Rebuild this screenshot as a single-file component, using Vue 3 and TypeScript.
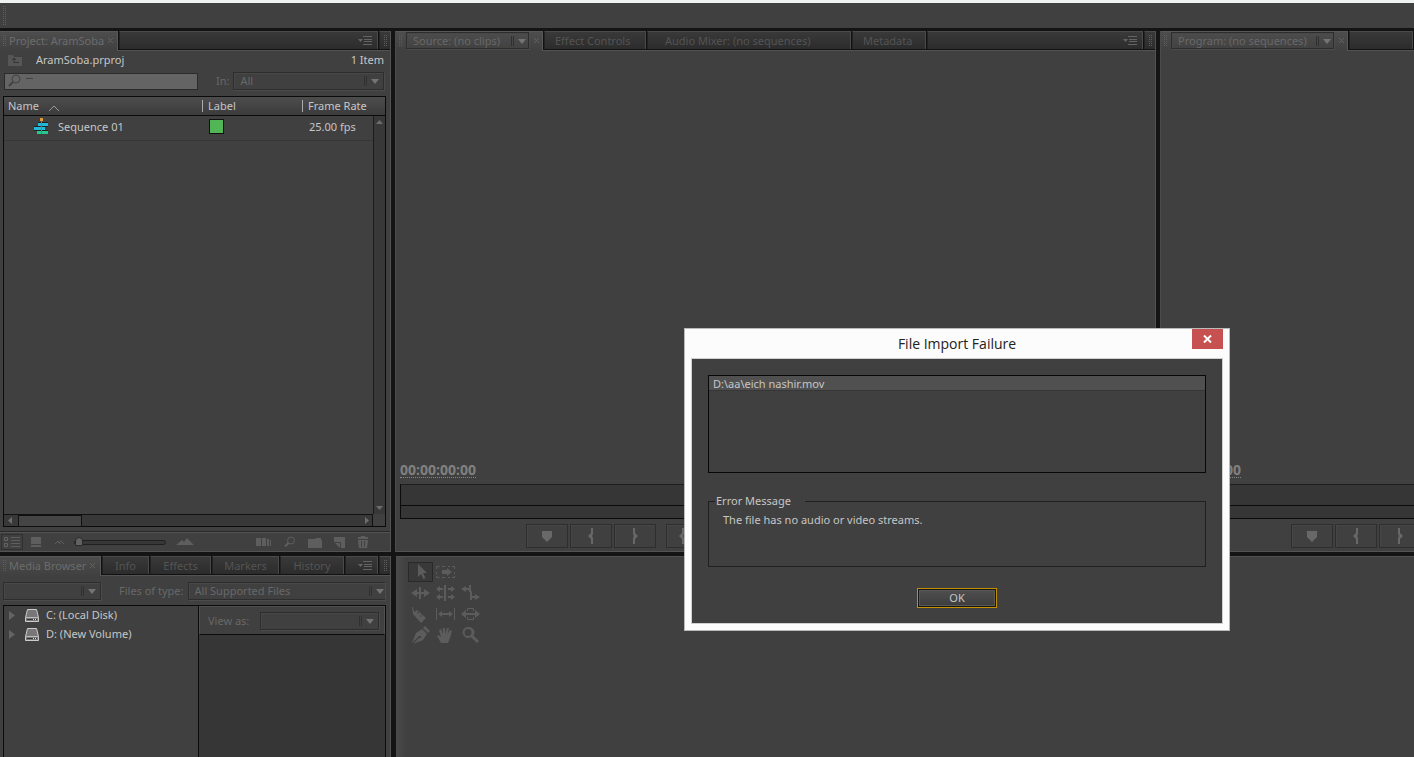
<script setup lang="ts">
import { ref } from 'vue'

interface Tab { label: string; width: number }
interface Monitor { id: string; title: string; pick: number; tabs: Tab[]; menu: boolean }

const monitors: Monitor[] = [
  {
    id: 'source',
    title: 'Source: (no clips)',
    pick: 123,
    menu: true,
    tabs: [
      { label: 'Effect Controls', width: 102 },
      { label: 'Audio Mixer: (no sequences)', width: 204 },
      { label: 'Metadata', width: 74 },
    ],
  },
  { id: 'program', title: 'Program: (no sequences)', pick: 163, menu: false, tabs: [] },
]

const browserTabs: Tab[] = [
  { label: 'Info', width: 47 },
  { label: 'Effects', width: 61 },
  { label: 'Markers', width: 67 },
  { label: 'History', width: 64 },
]

const drives = ['C: (Local Disk)', 'D: (New Volume)']
const search = ref('')
const zoom = ref(0)

const transport = [
  { name: 'Add marker', d: 'M3 3h10v6l-5 5-5-5z', split: false },
  { name: 'Mark in', d: 'M8 0h2v6l-1 2 1 2v6H8v-5L5 8l3-3z', split: false },
  { name: 'Mark out', d: 'M6 0h2v5l3 3-3 3v5H6v-6l1-2-1-2z', split: false },
  { name: 'Go to in', d: 'M3 0h2v6L4 8l1 2v6H3v-5L0 8l3-3zM7 8l4-4v3h5v2h-5v3z', split: true },
]

const tools = [
  { name: 'Selection', d: 'M7 1v13l3-3 2.5 5 2-1-2.5-5h4z', line: '' },
  { name: 'Track select', d: 'M6 7h5V5l5 4-5 4v-2H6z', line: 'M.5 6V3.500h3M6 3.500h3M12 3.500h2M16 3.500h2.500V6M.5 9v2M18.500 9v2M.5 13v1.500h3M6 14.500h3M12 14.500h2M16 14.500h2.500V13' },
  { name: '', d: '', line: '' },
  { name: 'Ripple edit', d: 'M0 9l6-4v3h2V3h2v5h3V5l6 4-6 4v-3h-3v5H8v-5H6v3z', line: '' },
  { name: 'Rolling edit', d: 'M8 1h2v16H8zM0 5l4-3v2h3v2H4v2zM19 5l-4-3v2h-3v2h3v2zM0 13l4-3v2h3v2H4v2zM19 13l-4-3v2h-3v2h3v2z', line: '' },
  { name: 'Rate stretch', d: 'M0 5l5-3v2h3V1h2v5l1 2v4h3v-2l5 3-5 3v-2h-3v2H9V9L7 6H5v2z', line: '' },
  { name: 'Razor', d: 'M1 2h1l1 5 3-2 9 8-5 5-8-9zM6 8l1 1 1-1-1-1zM9 11l1 1 1-1-1-1z', line: '' },
  { name: 'Slip', d: 'M2 9l4-3v2h7V6l4 3-4 3v-2H6v2z', line: 'M.5 3v12M18.500 3v12' },
  { name: 'Slide', d: 'M0 9l5-4v3h9V5l5 4-5 4v-3H5v3z', line: 'M6.500 6V3.500h6V6M6.500 12v2.500h6V12' },
  { name: 'Pen', d: 'M14 0l5 5-2 2-5-5zM11 3l5 5-4 6-10 4 6-6h2v-2L8 10l-7 7L5 7z', line: '' },
  { name: 'Hand', d: 'M5 17L1 10l1-1 3 2-2-7 2-1 2 5-.2-6h2l.7 6 1.500-6h2L11.500 8 14 4l2 1-2 7-2 5z', line: '' },
  { name: 'Zoom', d: 'M7 1a5.500 5.500 0 1 0 3 10.200L16 17l2-2-5.500-5.500A5.500 5.500 0 0 0 7 1zm0 2a3.500 3.500 0 1 1 0 7 3.500 3.500 0 0 1 0-7z', line: '' },
]
</script>

<template>
  <div class="app">
    <div class="chrome"></div>
    <header class="toolbar"><i class="grip tall"></i></header>

    <main class="workspace">
      <div class="row upper">
        <section class="panel side">
          <div class="tabs">
            <div class="tab active project-tab"><i class="grip"></i><span>Project: AramSoba</span>
              <button class="x" aria-label="Close project"><svg width="7" height="7" viewBox="0 0 7 7"><path d="M1 1l5 5M6 1L1 6" /></svg></button>
            </div>
            <div class="tab filler">
              <button class="menu" aria-label="Panel menu"><svg width="14" height="9" viewBox="0 0 14 9"><path d="M0 3h5L2.500 6z" /><path d="M5 0h9v1H5zM6 3h8v1H6zM6 5h8v1H6zM5 8h9v1H5z" /></svg></button>
            </div>
            <div class="tab end"><i class="grip"></i></div>
          </div>

          <div class="file-line">
            <svg width="14" height="12" viewBox="0 0 14 12"><path fill="#565656" d="M0 1h5l1 2h8v9H0z" /><path fill="none" stroke="#333" d="M6 4v4.500h5M4 6l2-2 2 2" /></svg>
            <span>AramSoba.prproj</span><span class="count">1 Item</span>
          </div>
          <div class="find-line">
            <label class="search">
              <svg width="26" height="14" viewBox="0 0 26 14"><circle cx="8" cy="5" r="4" fill="none" stroke="#424242" /><path stroke="#424242" stroke-width="2" d="M5 8l-4 4" /><path fill="#424242" d="M18 4h7v1h-7z" /></svg>
              <input v-model="search" type="text" aria-label="Search project" />
            </label>
            <label class="dim" for="in">In:</label>
            <div class="pick grow"><select id="in"><option>All</option></select><svg class="caret" width="15" height="12" viewBox="0 0 15 12"><path class="bar" d="M.5 1v10M2.500 1v10" /><path d="M7 4h8l-4 5z" /></svg></div>
          </div>

          <div class="bin">
            <table>
              <thead>
                <tr><th class="c-name">Name <svg width="12" height="7" viewBox="0 0 12 7"><path fill="none" stroke="#9a9a9a" d="M1 6l5-5 5 5" /></svg></th><th class="c-label"><span>Label</span></th><th><span>Frame Rate</span></th></tr>
              </thead>
              <tbody>
                <tr>
                  <td class="item">
                    <svg width="15" height="17" viewBox="0 0 15 17"><path fill="#25b8d6" d="M4 5h10v3H4zM0 9h11v3H0z" /><path fill="#25c98d" d="M3 13h11v3H3z" /><path fill="#222" d="M4 4h10v1H4zM0 8h14v1H0zM0 12h14v1H0z" /><path fill="#e29b35" d="M6 0h3v3H6z" /><path fill="#d1543c" d="M7 3h1v13H7z" /></svg>
                    <span>Sequence 01</span>
                  </td>
                  <td><i class="swatch"></i></td>
                  <td>25.00 fps</td>
                </tr>
              </tbody>
            </table>
            <div class="vbar"><svg width="7" height="4" viewBox="0 0 7 4"><path d="M0 4h7L3.500 0z" /></svg><svg width="7" height="4" viewBox="0 0 7 4"><path d="M0 0h7L3.500 4z" /></svg></div>
            <div class="hbar"><svg width="4" height="7" viewBox="0 0 4 7"><path d="M4 0v7L0 3.500z" /></svg><i class="thumb"></i><svg width="4" height="7" viewBox="0 0 4 7"><path d="M0 0v7l4-3.500z" /></svg></div>
          </div>

          <footer class="bin-tools">
            <button class="view on" aria-label="List view"><svg width="16" height="12" viewBox="0 0 16 12"><path fill="none" stroke="#646464" d="M.5 1.500h3v3h-3zM.5 7.500h3v3h-3z" /><path d="M7 1h9v1H7zM7 4h9v1H7zM7 7h9v1H7zM7 10h9v1H7z" /></svg></button>
            <button class="view" aria-label="Icon view"><svg width="10" height="10" viewBox="0 0 10 10"><path d="M0 0h10v7H0zM0 8h10v2H0z" /></svg></button>
            <svg width="9" height="5" viewBox="0 0 9 5"><path fill="none" stroke="#5e5e5e" d="M0 4l3-3 2 3M4 3l2-2 3 3" /></svg>
            <input v-model.number="zoom" class="zoom" type="range" min="0" max="100" aria-label="Thumbnail size" />
            <svg width="18" height="8" viewBox="0 0 18 8"><path d="M0 7l6-5 2 2 3-4 7 7z" /></svg>
            <div class="bin-actions">
              <button aria-label="Automate to sequence"><svg width="16" height="10" viewBox="0 0 16 10"><path d="M0 1h5v8H0zM6 1h4v8H6zM11 2h2v7h-2zM14 3h1v6h-1z" /></svg></button>
              <button aria-label="Find"><svg width="12" height="12" viewBox="0 0 12 12"><circle cx="7" cy="4.500" r="3.500" fill="none" stroke="#5e5e5e" /><path stroke="#5e5e5e" stroke-width="2" d="M4.500 7L1 10.500" /></svg></button>
              <button aria-label="New bin"><svg width="14" height="11" viewBox="0 0 14 11"><path d="M0 2h7l1-1h5v2H0zM0 3h14v8H0z" /></svg></button>
              <button aria-label="New item"><svg width="11" height="11" viewBox="0 0 11 11"><path d="M0 0h11v11H7V5H0z" /><path d="M1 6h5v5z" /></svg></button>
              <button aria-label="Clear"><svg width="12" height="12" viewBox="0 0 12 12"><path d="M4 0h4v1h3v2H1V1h3zM1 4h10l-1 8H2z" /><path stroke="#404040" d="M4.500 5v6M7.500 5v6" /></svg></button>
            </div>
          </footer>
        </section>

        <section v-for="m in monitors" :key="m.id" class="panel monitor" :class="m.id">
          <div class="tabs">
            <div class="tab active monitor-tab"><i class="grip"></i>
              <div class="pick" :style="{ width: m.pick + 'px' }"><select :aria-label="m.title"><option>{{ m.title }}</option></select><svg class="caret" width="15" height="12" viewBox="0 0 15 12"><path class="bar" d="M.5 1v10M2.500 1v10" /><path d="M7 4h8l-4 5z" /></svg></div>
              <button class="x" aria-label="Close panel"><svg width="7" height="7" viewBox="0 0 7 7"><path d="M1 1l5 5M6 1L1 6" /></svg></button>
            </div>
            <button v-for="t in m.tabs" :key="t.label" class="tab" :style="{ width: t.width + 'px' }">{{ t.label }}</button>
            <div class="tab filler">
              <button v-if="m.menu" class="menu" aria-label="Panel menu"><svg width="14" height="9" viewBox="0 0 14 9"><path d="M0 3h5L2.500 6z" /><path d="M5 0h9v1H5zM6 3h8v1H6zM6 5h8v1H6zM5 8h9v1H5z" /></svg></button>
            </div>
            <div v-if="m.menu" class="tab end"><i class="grip"></i></div>
          </div>
          <div class="screen"></div>
          <div class="time"><span>00:00:00:00</span></div>
          <div class="ruler"><i></i></div>
          <div class="transport">
            <button v-for="b in transport" :key="b.name" :class="{ split: b.split }" :aria-label="b.name"><svg width="16" height="16" viewBox="0 0 16 16"><path :d="b.d" /></svg></button>
          </div>
        </section>
      </div>

      <div class="row lower">
        <section class="panel side">
          <div class="tabs">
            <div class="tab active browser-tab"><i class="grip"></i><span>Media Browser</span>
              <button class="x" aria-label="Close media browser"><svg width="7" height="7" viewBox="0 0 7 7"><path d="M1 1l5 5M6 1L1 6" /></svg></button>
            </div>
            <button v-for="t in browserTabs" :key="t.label" class="tab center" :style="{ width: t.width + 'px' }">{{ t.label }}</button>
            <div class="tab filler">
              <button class="menu" aria-label="Panel menu"><svg width="14" height="9" viewBox="0 0 14 9"><path d="M0 3h5L2.500 6z" /><path d="M5 0h9v1H5zM6 3h8v1H6zM6 5h8v1H6zM5 8h9v1H5z" /></svg></button>
            </div>
            <div class="tab end"><i class="grip"></i></div>
          </div>
          <div class="type-line">
            <div class="pick recent"><select aria-label="Recent directories"><option></option></select><svg class="caret" width="15" height="12" viewBox="0 0 15 12"><path class="bar" d="M.5 1v10M2.500 1v10" /><path d="M7 4h8l-4 5z" /></svg></div>
            <label class="dim" for="types">Files of type:</label>
            <div class="pick grow cut"><select id="types"><option>All Supported Files</option></select><svg class="caret" width="15" height="12" viewBox="0 0 15 12"><path class="bar" d="M.5 1v10M2.500 1v10" /><path d="M7 4h8l-4 5z" /></svg></div>
          </div>
          <div class="browser">
            <ul>
              <li v-for="d in drives" :key="d">
                <svg width="6" height="9" viewBox="0 0 6 9"><path fill="#636363" d="M0 0l6 4.500L0 9z" /></svg>
                <svg width="14" height="13" viewBox="0 0 14 13"><path fill="#777" stroke="#ccc" d="M2.500.5h9l2 8v4H.5v-4z" /><path fill="#bbb" d="M1 8h12v1H1z" /><path fill="#333" d="M2 10h10v1H2z" /><path fill="#ddd" d="M8 10h1v1H8zM10 10h1v1h-1z" /></svg>
                <span>{{ d }}</span>
              </li>
            </ul>
            <div class="viewer">
              <div class="view-as"><label class="dim" for="view">View as:</label>
                <div class="pick grow"><select id="view"><option></option></select><svg class="caret" width="15" height="12" viewBox="0 0 15 12"><path class="bar" d="M.5 1v10M2.500 1v10" /><path d="M7 4h8l-4 5z" /></svg></div>
              </div>
            </div>
          </div>
        </section>
        <section class="panel timeline">
          <div class="tools">
            <template v-for="(t, i) in tools" :key="i">
              <button v-if="t.name" :class="{ on: i === 0 }" :aria-label="t.name"><svg width="19" height="18" viewBox="0 0 19 18"><path :d="t.d" fill-rule="evenodd" /><path class="line" :d="t.line" /></svg></button>
              <span v-else></span>
            </template>
          </div>
        </section>
      </div>
    </main>

    <div class="dialog" role="dialog" aria-labelledby="dialog-title">
      <h1 id="dialog-title">File Import Failure</h1>
      <button class="close" aria-label="Close"><svg width="9" height="8" viewBox="0 0 9 8"><path d="M1 .5l7 7M8 .5l-7 7" stroke="#fff" stroke-width="2" /></svg></button>
      <div class="dialog-body">
        <ul class="files"><li>D:\aa\eich nashir.mov</li></ul>
        <fieldset><legend>Error Message</legend><p>The file has no audio or video streams.</p></fieldset>
        <button class="ok">OK</button>
      </div>
    </div>
  </div>
</template>

<style>
body { background: #141414; overflow: hidden; }
</style>

<style scoped>
* { box-sizing: border-box; }
.app { position: relative; display: flex; flex-direction: column; height: 100vh; overflow: hidden; background: #141414; color: #c6c6c6; font: 11px/14px "Noto Sans", "DejaVu Sans Condensed", sans-serif; }
svg { display: block; flex: none; }
button, select, input { font: inherit; color: inherit; background: none; border: 0; padding: 0; margin: 0; outline: 0; }
ul { list-style: none; margin: 0; padding: 0; }
.chrome { height: 3px; flex: none; background: #f0f1f1; }
.toolbar { height: 25px; flex: none; background: #404040; padding: 3px 2px; }
.grip { display: block; flex: none; width: 4px; height: 11px; background: conic-gradient(#5e5e5e 25%, transparent 0) 0 0 / 2px 2px; }
.grip.tall { height: 20px; }
.workspace { flex: 1; min-height: 0; display: grid; grid-template-rows: minmax(0, 521fr) minmax(0, 201fr); gap: 4px; padding-top: 3px; }
.row { display: flex; gap: 4px; min-height: 0; }
.lower { gap: 5px; }
.panel { display: flex; flex-direction: column; min-width: 0; background: #404040; overflow: hidden; }
.side { flex: none; width: 391px; border-right: 1px solid #535353; }
.monitor { flex: 1 1 0; border-bottom: 1px solid #535353; border-left: 1px solid #4b4b4b; }
.source { flex-grow: 3; border-right: 1px solid #505050; }
.timeline { flex: 1; border-top: 1px solid #505050; background: linear-gradient(90deg, #4b4b4b, #404040 10px); }

.tabs { display: flex; flex: none; height: 20px; border-bottom: 1px solid #535353; background: #111; }
.tab { height: 18px; flex: none; display: flex; align-items: center; border: solid #4a4a4a; border-width: 1px 1px 0 0; background: linear-gradient(#393939, #2c2c2c); color: #545454; margin-right: 1px; white-space: nowrap; padding-left: 10px; }
.tab + .tab { border-left: 1px solid #232323; }
.tab:nth-child(3):not(.center, .filler, .end) { padding-left: 17px; }
.tab.center { justify-content: center; padding: 0; }
.tab.active { height: 20px; margin-bottom: -1px; border: solid #585858; border-width: 1px 1px 0 0; background: linear-gradient(#4d4d4d, #404040); color: #6c6c6c; padding: 0 4px 2px 2px; gap: 3px; }
.tab.filler { flex: 1; min-width: 0; justify-content: flex-end; padding-right: 5px; }
.tab.end { width: 11px; padding: 0 0 0 3px; margin: 0; border-right: 0; }
.tab.project-tab { width: 118px; }
.tab.browser-tab { width: 101px; }
.tab.monitor-tab { gap: 4px; padding-right: 2px; }
.x { margin-left: auto; }
.x svg { stroke: #626262; fill: none; }
.menu svg { fill: #646464; }

.pick { display: flex; align-items: center; flex: none; height: 18px; border: 1px solid #2d2d2d; box-shadow: 1px 1px #4b4b4b, inset 1px 1px #484848; color: #686868; padding: 0 4px 0 6px; }
.pick select { flex: 1; min-width: 0; appearance: none; height: 14px; line-height: 14px; }
.pick.grow { flex: 1; min-width: 0; }
.pick.cut { border-right: 0; padding-right: 1px; }
.monitor-tab .pick { height: 17px; padding-right: 2px; }
.caret { fill: #747474; }
.caret .bar { stroke: #303030; fill: none; }
.dim { color: #686868; white-space: nowrap; }

.file-line { display: flex; align-items: center; gap: 14px; height: 20px; padding: 0 6px 2px 8px; }
.count { margin-left: auto; }
.find-line { display: flex; align-items: center; height: 20px; padding: 0 6px 0 4px; gap: 4px; }
.search { display: flex; align-items: center; width: 194px; height: 17px; margin-right: 14px; border: 1px solid #2b2b2b; background: #646464; padding-left: 3px; color: #222; }
.search input { flex: 1; min-width: 0; }

.bin { flex: 1; min-height: 0; display: grid; grid-template: 19px 1fr 12px / 1fr 12px; margin: 5px 4px 4px 3px; border: 1px solid #0b0b0b; }
table { grid-area: 1 / 1 / 3 / 3; align-self: start; width: 100%; table-layout: fixed; border-collapse: collapse; }
th { height: 18px; padding: 0 0 0 4px; text-align: left; font-weight: normal; line-height: 12px; background: linear-gradient(#4d4d4d, #3b3b3b); border-bottom: 1px solid #0b0b0b; }
.c-name { width: 198px; }
.c-name svg { display: inline-block; margin-left: 6px; vertical-align: -2px; }
.c-label { width: 100px; }
th span { display: block; border-left: 1px solid #aaa; padding-left: 5px; margin-left: -4px; }
td { height: 25px; padding: 0 0 2px 7px; border-bottom: 1px solid #363636; }
.item { display: flex; align-items: center; gap: 9px; padding-left: 30px; }
.swatch { display: block; width: 15px; height: 15px; border: 1px solid #101010; background: #50b656; }
.vbar { grid-area: 2 / 2 / 3 / 3; display: flex; flex-direction: column; justify-content: space-between; align-items: center; padding: 4px 0; background: #383838; border-left: 1px solid #1b1b1b; position: relative; }
.hbar { grid-area: 3 / 1 / 4 / 2; display: flex; align-items: center; gap: 6px; padding: 0 3px 0 4px; background: #383838; border: solid #111; border-width: 1px 1px 0 0; }
.hbar svg, .vbar svg { fill: #6c6c6c; }
.hbar .thumb { width: 64px; height: 12px; margin-right: auto; background: #454545; border: 1px solid #111; }
.bin-tools { display: flex; align-items: center; flex: none; height: 21px; border-top: 1px solid #292929; box-shadow: inset 0 1px #535353; border-bottom: 1px solid #535353; padding: 1px 21px 0 1px; gap: 14px; }
.bin-tools svg { fill: #5e5e5e; }
.bin-actions { display: flex; align-items: center; gap: 12px; margin-left: auto; }
.view.on { border: 1px solid #303030; padding: 1px 2px; }
.view + .view { margin-left: -6px; }
.zoom { appearance: none; width: 92px; height: 10px; margin: 0 -4px; }
.zoom::-webkit-slider-runnable-track { height: 5px; border: 1px solid #1f1f1f; border-radius: 3px; background: #373737; }
.zoom::-webkit-slider-thumb { appearance: none; width: 8px; height: 9px; margin-top: -4px; background: #626262; border: 1px solid #2a2a2a; border-radius: 4px 4px 0 0; }

.screen { flex: 1; }
.time { height: 22px; padding-left: 4px; font: 700 14px/15px "Open Sans", "Noto Sans", sans-serif; color: #808080; }
.time span { display: inline-block; border-bottom: 1px dotted #868686; height: 16px; }
.ruler { height: 35px; margin: 0 4px; border: 1px solid #0b0b0b; border-top-color: #1d1d1d; background: #363636; padding-top: 20px; flex: none; }
.program .ruler { margin-right: 0; border-right: 0; }
.ruler i { display: block; border-top: 1px solid #0b0b0b; }
.transport { display: flex; gap: 2px; padding: 5px 0 3px 130px; flex: none; }
.transport button { display: grid; place-items: center; flex: none; width: 42px; height: 24px; border: 1px solid #2e2e2e; box-shadow: inset 1px 1px #464646; }
.transport .split { margin-left: 8px; }
.transport svg { fill: #686868; }

.type-line { display: flex; align-items: center; flex: none; height: 29px; padding: 0 5px 0 3px; gap: 4px; }
.recent { width: 98px; margin-right: 14px; }
.browser { flex: 1; min-height: 0; display: flex; margin: 0 4px 0 3px; border: 1px solid #0b0b0b; border-bottom: 0; }
.browser ul { width: 194px; }
.browser li { display: flex; align-items: center; height: 19px; padding: 0 0 1px 5px; }
.browser li svg + svg { margin: 0 7px 0 10px; }
.viewer { flex: 1; border-left: 1px solid #0b0b0b; background: #363636; }
.view-as { display: flex; align-items: center; height: 29px; padding: 0 5px 0 8px; gap: 11px; background: #404040; border: 1px solid #505050; border-bottom-color: #0b0b0b; }

.tools { display: grid; grid-template-columns: repeat(3, 25px); grid-auto-rows: 21px; padding: 5px 0 0 12px; }
.tools button { display: grid; place-items: center; border: 1px solid transparent; width: 25px; height: 20px; }
.tools .on { border-color: #292929; background: #393939; }
.tools svg { fill: #5c5c5c; }
.tools .line { fill: none; stroke: #5c5c5c; }

.dialog { position: absolute; left: 684px; top: 328px; width: 546px; display: flex; flex-direction: column; background: #fcfcfc; border: 1px solid #b9bbbb; padding: 0 6px 6px; }
.dialog h1 { margin: 0; height: 29px; text-align: center; font: 14px/29px "Open Sans", "Noto Sans", sans-serif; color: #222; }
.close { position: absolute; top: 0; right: 6px; width: 31px; height: 20px; background: #c75050; display: grid; place-items: center; }
.dialog-body { border: 1px solid #cfd1d1; background: #404040; padding: 16px 16px 15px; display: flex; flex-direction: column; }
.files { height: 98px; border: 1px solid #080808; }
.files li { height: 15px; line-height: 15px; padding-left: 4px; background: #505050; border-bottom: 1px solid #363636; }
fieldset { margin: 21px 0 0; height: 73px; min-width: 0; border: 1px solid #202020; padding: 0 14px; }
legend { margin-left: -8px; padding: 0 14px 0 1px; }
fieldset p { margin: 5px 0 0; }
.ok { align-self: center; width: 80px; height: 20px; margin: 21px 0 0; background: linear-gradient(#505050, #3c3c3c); border: 1px solid #c49100; box-shadow: inset 0 0 0 1px #161616, inset 0 0 0 2px #5a5a5a; line-height: 14px; }
</style>
